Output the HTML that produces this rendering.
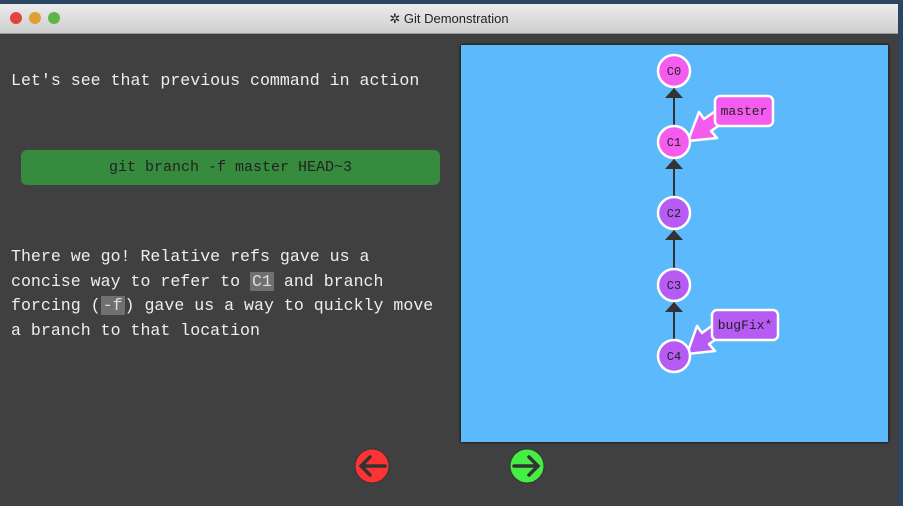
<!DOCTYPE html>
<html><head><style>
body{margin:0;width:903px;height:506px;background:#2a4660;overflow:hidden;position:relative;font-family:"Liberation Mono",monospace}
#win{position:absolute;left:0;top:4px;width:898px;height:502px;background:#404040}
#title{position:absolute;left:0;top:0;width:898px;height:29px;background:linear-gradient(#ececec,#cfcfcf);border-bottom:1px solid #999;font-family:"Liberation Sans",sans-serif;font-size:13px;color:#222;text-align:center;line-height:29px}
.dot{position:absolute;top:8px;width:12px;height:12px;border-radius:50%}
.t{position:absolute;left:11px;color:#eee;font-size:16.6px;white-space:pre}
#cmd{position:absolute;left:21px;top:146px;width:419px;height:35px;background:#378b3e;border-radius:6px;color:#222;font-size:15px;text-align:center;line-height:35px}
.c{background:#707070;color:#ddd;padding:0 2px}
#panel{position:absolute;left:461px;top:41px;width:427px;height:397px;background:#5cb9fb;box-shadow:0 0 3px #000}
</style></head><body>
<div id="win">
<div id="title"><span class="dot" style="left:10px;background:#e0443e"></span><span class="dot" style="left:29px;background:#dea032"></span><span class="dot" style="left:48px;background:#5fb648"></span>✲ Git Demonstration</div>
<div class="t" style="top:67px">Let's see that previous command in action</div>
<div id="cmd">git branch -f master HEAD~3</div>
<div class="t" style="top:241px;line-height:24.5px">There we go! Relative refs gave us a
concise way to refer to <span class="c">C1</span> and branch
forcing (<span class="c">-f</span>) gave us a way to quickly move
a branch to that location</div>
<div id="panel"></div>
<svg style="position:absolute;left:0;top:-4px" width="903" height="506">
<g stroke="#333" stroke-width="2"><line x1="674" y1="87" x2="674" y2="126"/><line x1="674" y1="158" x2="674" y2="197"/><line x1="674" y1="229" x2="674" y2="269"/><line x1="674" y1="301" x2="674" y2="340"/></g>
<g fill="#333"><path d="M665 98h18l-9-10z"/><path d="M665 169h18l-9-10z"/><path d="M665 240h18l-9-10z"/><path d="M665 312h18l-9-10z"/></g>
<g stroke="#fff" stroke-width="2.5" stroke-linejoin="round">
<path d="M720 108 L704 119 L699 112 L688 141 L717 138 L711 131 L727 120 Z" fill="#f45cf0"/>
<path d="M717 322 L702 333 L697 326 L687 354 L715 351 L709 344 L724 334 Z" fill="#b65cf4"/>
<rect x="715" y="96" width="58" height="30" rx="5" fill="#f45cf0"/>
<rect x="712" y="310" width="66" height="30" rx="5" fill="#b65cf4"/>
<circle cx="674" cy="71" r="16" fill="#f45cf0"/><circle cx="674" cy="142" r="16" fill="#f45cf0"/>
<circle cx="674" cy="213" r="16" fill="#b65cf4"/><circle cx="674" cy="285" r="16" fill="#b65cf4"/><circle cx="674" cy="356" r="16" fill="#b65cf4"/>
</g>
<g font-family="Liberation Mono,monospace" font-size="12" fill="#222" text-anchor="middle">
<text x="674" y="75">C0</text><text x="674" y="146">C1</text><text x="674" y="217">C2</text><text x="674" y="289">C3</text><text x="674" y="360">C4</text>
<text x="744" y="115" font-size="13">master</text><text x="745" y="329" font-size="13">bugFix*</text></g>
<circle cx="372" cy="466" r="17" fill="#f33" stroke="#333" stroke-width="1"/><circle cx="527" cy="466" r="17" fill="#4e4" stroke="#333" stroke-width="1"/>
<g stroke="#333" stroke-width="3.5" fill="none" stroke-linecap="round"><path d="M385 466H362M370 457l-9 9 9 9"/><path d="M514 466h23M529 457l9 9-9 9"/></g>
</svg>
</div>
</body></html>
